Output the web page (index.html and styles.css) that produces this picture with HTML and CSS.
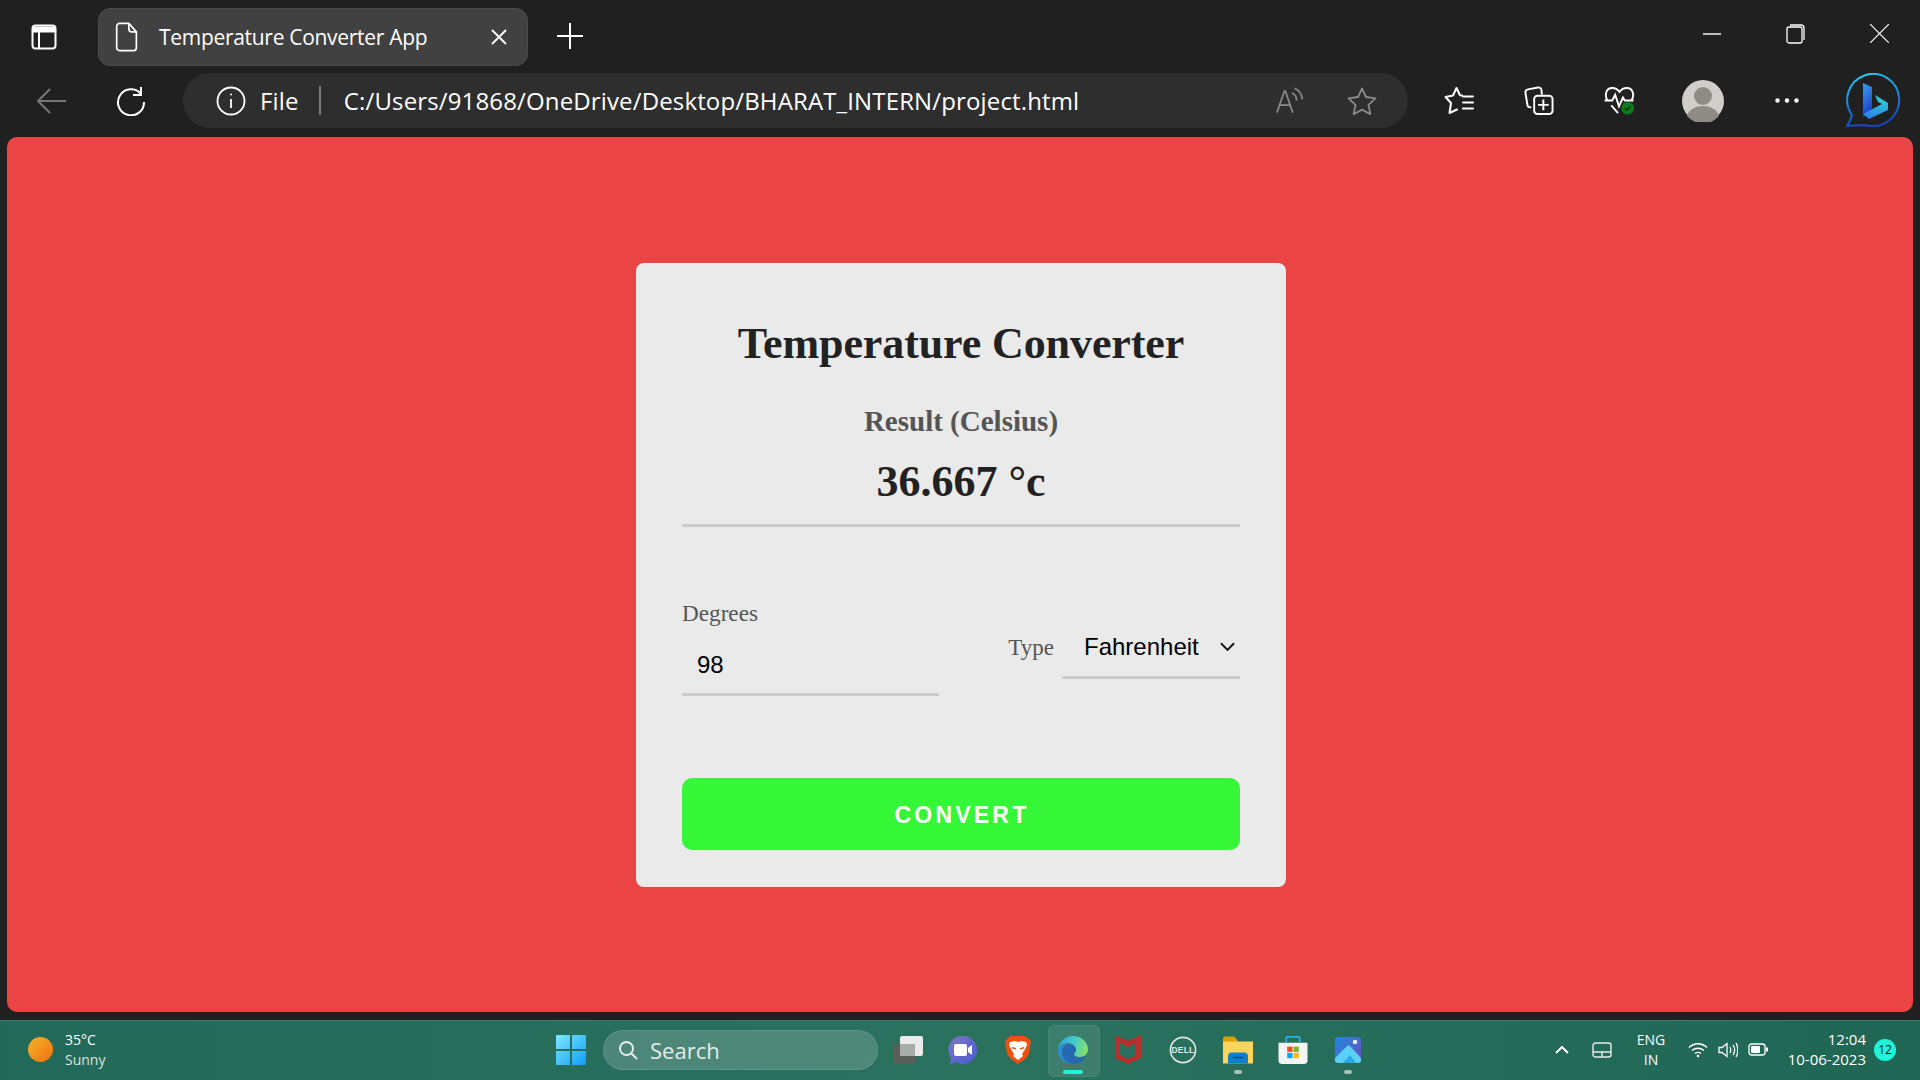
FILE: index.html
```html
<!DOCTYPE html>
<html lang="en">
<head>
    <meta charset="UTF-8">
    <meta name="viewport" content="width=device-width, initial-scale=1.0">
    <title>Temperature Converter App</title>
    <link rel="stylesheet" href="styles.css">
</head>
<body>
    <!-- Browser tabs row -->
    <div class="tab-row">
        <svg class="sidebar-icon" viewBox="0 0 26 26" fill="none" stroke="#fff" stroke-width="2">
            <rect x="1.5" y="1.5" width="23" height="23" rx="3"/>
            <path d="M2 3.5h22v4H2z" fill="#fff"/>
            <path d="M8 7v17"/>
        </svg>
        <div class="tab">
            <svg class="tab-doc" viewBox="0 0 24 32" fill="none" stroke="#fff" stroke-width="1.8" stroke-linejoin="round">
                <path d="M4 1.5h10l8 9v17a3 3 0 0 1-3 3H4a3 3 0 0 1-3-3v-23a3 3 0 0 1 3-3z"/>
                <path d="M14 1.5v6a3 3 0 0 0 3 3h5"/>
            </svg>
            <span class="tab-title">Temperature Converter App</span>
            <svg class="tab-close" viewBox="0 0 16 16" stroke="#fff" stroke-width="1.8"><path d="M1 1l14 14M15 1L1 15"/></svg>
        </div>
        <svg class="new-tab" viewBox="0 0 26 26" stroke="#fff" stroke-width="2"><path d="M13 0v26M0 13h26"/></svg>
        <div class="window-btns">
            <svg class="win-min" viewBox="0 0 18 2" stroke="#fff" stroke-width="1.4"><path d="M0 1h18"/></svg>
            <svg class="win-restore" viewBox="0 0 19 20" fill="none" stroke="#fff" stroke-width="1.3">
                <rect x="1" y="3" width="15" height="16" rx="2"/>
                <path d="M4 1h11a3 3 0 0 1 3 3v12"/>
            </svg>
            <svg class="win-close" viewBox="0 0 19 19" stroke="#fff" stroke-width="1.2"><path d="M0 0l19 19M19 0L0 19"/></svg>
        </div>
    </div>

    <!-- Address bar row -->
    <div class="tool-row">
        <svg class="back-icon" viewBox="0 0 30 26" fill="none" stroke="#777" stroke-width="2"><path d="M30 13H2M14 1L2 13l12 12"/></svg>
        <svg class="reload-icon" viewBox="0 0 30 30" fill="none" stroke="#fff" stroke-width="2">
            <path d="M25 8A13 13 0 1 0 28 16"/>
            <path d="M25 1v8h-8"/>
        </svg>
        <div class="address">
            <svg class="info-icon" viewBox="0 0 30 30" fill="none" stroke="#fff" stroke-width="1.8">
                <circle cx="15" cy="15" r="13.5"/>
                <path d="M15 13v9"/>
                <circle cx="15" cy="8.5" r="1" fill="#fff" stroke="none"/>
            </svg>
            <span class="file-label">File</span>
            <span class="address-sep"></span>
            <span class="url">C:/Users/91868/OneDrive/Desktop/BHARAT_INTERN/project.html</span>
            <svg class="read-icon" viewBox="0 0 30 28" fill="none" stroke="#8a8a8a" stroke-width="1.8">
                <path d="M1 27L9 4h1l8 23M4 19h12"/>
                <path d="M17 6c3 1 5 4 5 8M20 1c4 2 8 6 8 12"/>
            </svg>
            <svg class="addr-star" viewBox="0 0 30 28" fill="none" stroke="#8a8a8a" stroke-width="1.8" stroke-linejoin="round">
                <path d="M15 1.5l4 8.5 9.5 1.3-7 6.6 1.8 9.3-8.3-4.6-8.3 4.6 1.8-9.3-7-6.6L11 10z"/>
            </svg>
        </div>
        <svg class="tool-icon fav-icon" viewBox="0 0 30 28" fill="none" stroke="#fff" stroke-width="2" stroke-linejoin="round" stroke-linecap="round">
            <path d="M18 9l-2-.3L12.500 1.500 9 9 1.500 10.500 7 16.500 5.500 26.500l7.500-3.500"/>
            <path d="M19 10h10M19 16h10M19 22h10"/>
        </svg>
        <svg class="tool-icon coll-icon" viewBox="0 0 30 30" fill="none" stroke="#fff" stroke-width="2">
            <path d="M7 22H6a3 3 0 0 1-3-2.500L1 7a3 3 0 0 1 2.500-3.500L14 1.500a3 3 0 0 1 3.500 2.500L18 9"/>
            <rect x="10" y="10" width="19" height="19" rx="3.500"/>
            <path d="M19.500 14v11M14 19.500h11"/>
        </svg>
        <svg class="tool-icon heart-icon" viewBox="0 0 31 30" fill="none" stroke="#fff" stroke-width="2">
            <path d="M3 15C0 10 1 2 8 2c3 0 6 2 7.500 4C17 4 20 2 23 2c7 0 8 8 5 13"/>
            <path d="M0 15h8l3-6 4 12 4-9 2 3h9"/>
            <path d="M7 20l7 8"/>
            <circle cx="24" cy="23" r="6.500" fill="#0f7a1e" stroke="none"/>
            <path d="M21 23l2 2 4-4" stroke="#12350f" stroke-width="1.500"/>
        </svg>
        <svg class="avatar" viewBox="0 0 42 42">
            <circle cx="21" cy="21" r="21" fill="#cfcec9"/>
            <circle cx="21" cy="16" r="9" fill="#8f8c88"/>
            <path d="M5 36c2-7 9-10 16-10s14 3 16 10a21 21 0 0 1-32 0z" fill="#8f8c88"/>
        </svg>
        <svg class="dots-icon" viewBox="0 0 24 5" fill="#fff">
            <circle cx="2.500" cy="2.500" r="2.200"/>
            <circle cx="12" cy="2.500" r="2.200"/>
            <circle cx="21.500" cy="2.500" r="2.200"/>
        </svg>
        <svg class="bing-icon" viewBox="0 0 55 55" fill="none">
            <defs>
                <linearGradient id="bingEdge" x1="0.300" y1="0" x2="0.500" y2="1">
                    <stop offset="0" stop-color="#26c6f0"/>
                    <stop offset="1" stop-color="#1545c0"/>
                </linearGradient>
                <linearGradient id="bingB" x1="0" y1="0" x2="0.300" y2="1">
                    <stop offset="0" stop-color="#3aa0f0"/>
                    <stop offset="1" stop-color="#1b3fc8"/>
                </linearGradient>
                <linearGradient id="bingC" x1="0.600" y1="0" x2="0.400" y2="1">
                    <stop offset="0" stop-color="#2fd6d8"/>
                    <stop offset="1" stop-color="#2a7fe6"/>
                </linearGradient>
            </defs>
            <path d="M1 53C3 50 5 47 6 42A26 26 0 1 1 22 52.400C14 52 8 52 1 53z" stroke="url(#bingEdge)" stroke-width="2"/>
            <path d="M17 10l9 4v24l-9 6z" fill="url(#bingB)"/>
            <path d="M29 22l13 8v7L23 46l-6-5 19-10-4-2z" fill="url(#bingC)"/>
        </svg>
    </div>

    <!-- Page content -->
    <div class="viewport">
        <main class="page">
            <section class="card">
                <h1 class="card-title">Temperature Converter</h1>
                <h2 class="result-label">Result (Celsius)</h2>
                <p class="result-value">36.667 °c</p>
                <hr class="divider">
                <div class="form-row">
                    <div class="degrees-group">
                        <label class="field-label" for="degrees">Degrees</label>
                        <input class="degrees-input" type="text" id="degrees" value="98">
                    </div>
                    <div class="type-group">
                        <label class="field-label type-label" for="type">Type</label>
                        <div class="select-wrap">
                            <select class="type-select" id="type">
                                <option>Fahrenheit</option>
                                <option>Celsius</option>
                            </select>
                            <svg class="select-arrow" viewBox="0 0 16 10" fill="none" stroke="#111" stroke-width="2"><path d="M1 1l7 7 7-7"/></svg>
                        </div>
                    </div>
                </div>
                <button class="convert-btn" type="button">CONVERT</button>
            </section>
        </main>
    </div>

    <!-- Windows taskbar -->
    <footer class="taskbar">
        <div class="weather">
            <span class="sun"></span>
            <div class="weather-text">
                <span class="temp">35°C</span>
                <span class="sky">Sunny</span>
            </div>
        </div>
        <div class="start-btn">
            <svg class="start-icon" viewBox="0 0 30 30">
                <defs>
                    <linearGradient id="winBlue" x1="0" y1="0" x2="1" y2="1">
                        <stop offset="0" stop-color="#7fe8ff"/>
                        <stop offset="1" stop-color="#0f9cf5"/>
                    </linearGradient>
                </defs>
                <path d="M0 1a1 1 0 0 1 1-1h13v14H0zM16 0h13a1 1 0 0 1 1 1v13H16zM0 16h14v14H1a1 1 0 0 1-1-1zM16 16h14v13a1 1 0 0 1-1 1H16z" fill="url(#winBlue)"/>
            </svg>
        </div>
        <div class="search-pill">
            <svg class="search-icon" viewBox="0 0 20 20" fill="none" stroke="#e6ece9" stroke-width="2"><circle cx="8.500" cy="8.500" r="6.500"/><path d="M13 13l6 6"/></svg>
            <span>Search</span>
        </div>
        <div class="task-icons">
            <div class="task-item">
                <svg class="task-svg" viewBox="0 0 30 28">
                    <rect x="0" y="8" width="22" height="20" rx="2" fill="#5a5f5c"/>
                    <rect x="7" y="0" width="23" height="20" rx="2" fill="#e8ebe9"/>
                    <rect x="7" y="8" width="15" height="12" fill="#a9aeab"/>
                </svg>
            </div>
            <div class="task-item">
                <svg class="task-svg" viewBox="0 0 30 28">
                    <defs>
                        <linearGradient id="meetGrad" x1="0" y1="0" x2="1" y2="1">
                            <stop offset="0" stop-color="#7a78c8"/>
                            <stop offset="1" stop-color="#4c5bd0"/>
                        </linearGradient>
                    </defs>
                    <path d="M15 0a14 14 0 1 1-7 26c-2 1-4 2-7 2 1-1 2-3 2-6A14 14 0 0 1 15 0z" fill="url(#meetGrad)"/>
                    <rect x="6" y="8" width="13" height="12" rx="2" fill="#fff"/>
                    <path d="M20 12l4-3v10l-4-3z" fill="#fff"/>
                </svg>
            </div>
            <div class="task-item">
                <svg class="task-svg brave-svg" viewBox="0 0 26 28">
                    <path d="M6 0h14l4 3 2 2-2 12c-1 4-6 8-11 11C8 25 3 21 2 17L0 5l2-2z" fill="#f1500f"/>
                    <path d="M5 6l5-1 3 1 3-1 5 1 1 3-3 6-2 3 1 2-5 4-5-4 1-2-2-3-3-6z" fill="#fff"/>
                    <path d="M7 11l4 1v1.500l-4-1zM19 11l-4 1v1.500l4-1z" fill="#f1500f"/>
                </svg>
            </div>
            <div class="task-item task-active">
                <svg class="task-svg" viewBox="0 0 30 28">
                    <defs>
                        <linearGradient id="edgeTop" x1="0" y1="0.300" x2="1" y2="0.500">
                            <stop offset="0" stop-color="#1a9be0"/>
                            <stop offset="0.550" stop-color="#30c8c0"/>
                            <stop offset="1" stop-color="#7fdc55"/>
                        </linearGradient>
                    </defs>
                    <path d="M15 0c8 0 15 6 15 13 0 5-4 8-8 8-3 0-6-1-6-3 0-1 2-2 2-4 0-4-4-7-9-7-4 0-7 2-9 6C1 6 7 0 15 0z" fill="url(#edgeTop)"/>
                    <path d="M0 13c2-3 5-5 9-5-4 2-6 6-5 10 1 5 6 10 13 10h-3C6 28 0 21 0 13z" fill="#0f86d8"/>
                    <path d="M9 8c4-1 9 2 9 6 0 2-2 2-2 4 0 3 4 4 8 3 2 0 3-1 4-1-3 5-7 8-12 8-6 0-11-4-12-10-1-4 1-8 5-10z" fill="#0d5aa8"/>
                </svg>
                <span class="active-bar"></span>
            </div>
            <div class="task-item">
                <svg class="task-svg mcafee-svg" viewBox="0 0 26 29"><path d="M0 0l13 6 13-6v23l-13 6-13-6zM5 8v12l8 4 8-4V8l-8 4z" fill="#b5302c"/></svg>
            </div>
            <div class="task-item">
                <svg class="task-svg" viewBox="0 0 30 30" fill="none">
                    <circle cx="15" cy="15" r="13.500" stroke="#e4e8e6" stroke-width="1.700"/>
                    <text class="dell-text" x="15" y="18" text-anchor="middle">DELL</text>
                </svg>
            </div>
            <div class="task-item">
                <svg class="task-svg" viewBox="0 0 30 27">
                    <path d="M0 2a2 2 0 0 1 2-2h9l4 4v6H0z" fill="#d9a008"/>
                    <path d="M0 5h30v22H0z" fill="#fbd55e"/>
                    <path d="M5 27v-7a4 4 0 0 1 4-4h12a4 4 0 0 1 4 4v7z" fill="#0c7fd0"/>
                    <path d="M10 21h10" stroke="#063f75" stroke-width="1.300"/>
                </svg>
                <span class="running-dot"></span>
            </div>
            <div class="task-item">
                <svg class="task-svg" viewBox="0 0 30 29">
                    <path d="M0 7h30v18a4 4 0 0 1-4 4H4a4 4 0 0 1-4-4z" fill="#f3f4f4"/>
                    <path d="M8 7V2a1 1 0 0 1 1-1h12a1 1 0 0 1 1 1v5" fill="none" stroke="#23b4e8" stroke-width="1.800"/>
                    <rect x="9" y="11" width="5.500" height="5.500" fill="#ea4c25"/>
                    <rect x="15.500" y="11" width="5.500" height="5.500" fill="#7fb900"/>
                    <rect x="9" y="17.500" width="5.500" height="5.500" fill="#05a5ef"/>
                    <rect x="15.500" y="17.500" width="5.500" height="5.500" fill="#ffb800"/>
                </svg>
            </div>
            <div class="task-item">
                <svg class="task-svg photos-svg" viewBox="0 0 26 26">
                    <defs>
                        <linearGradient id="photoBg" x1="0" y1="0" x2="1" y2="1">
                            <stop offset="0" stop-color="#1c8ae0"/>
                            <stop offset="1" stop-color="#6f4bb8"/>
                        </linearGradient>
                    </defs>
                    <rect width="26" height="26" rx="3" fill="url(#photoBg)"/>
                    <circle cx="20" cy="5" r="2.300" fill="#e8e6f6"/>
                    <path d="M0 21L12 9a2 2 0 0 1 3 0l11 12v2a3 3 0 0 1-3 3H3a3 3 0 0 1-3-3z" fill="#5ad0f5"/>
                    <path d="M8 26l7-8 6 8z" fill="#2aa7e8"/>
                </svg>
                <span class="running-dot"></span>
            </div>
        </div>
        <div class="tray">
            <svg class="tray-chevron" viewBox="0 0 14 8" fill="none" stroke="#fff" stroke-width="2"><path d="M1 7l6-6 6 6"/></svg>
            <svg class="tray-pad" viewBox="0 0 20 16" fill="none" stroke="#e6ece9" stroke-width="1.400">
                <rect x="1" y="1" width="18" height="14" rx="2.500"/>
                <path d="M1 10h18M10 10v5"/>
            </svg>
            <div class="lang"><span>ENG</span><span>IN</span></div>
            <svg class="tray-wifi" viewBox="0 0 20 16" fill="none" stroke="#fff" stroke-width="1.400">
                <path d="M1 5.500c5-5 13-5 18 0M4 8.500c3.500-3 8.500-3 12 0M7 11.500c2-1.500 4-1.500 6 0"/>
                <circle cx="10" cy="14" r="1.300" fill="#fff" stroke="none"/>
            </svg>
            <svg class="tray-sound" viewBox="0 0 20 16" fill="none" stroke="#fff" stroke-width="1.300">
                <path d="M1 5.500h3L9 1.500v13L4 10.500H1z"/>
                <path d="M12 5c1 2 1 4 0 6M15 3c2 3 2 7 0 10M18 1c2.500 4 2.500 10 0 14"/>
            </svg>
            <svg class="tray-battery" viewBox="0 0 20 13" fill="none" stroke="#fff" stroke-width="1.300">
                <rect x="1" y="1" width="16" height="11" rx="2.500"/>
                <rect x="3" y="3" width="9" height="7" rx="1" fill="#fff" stroke="none"/>
                <path d="M19 4.500v4" stroke-width="2"/>
            </svg>
            <div class="clock"><span>12:04</span><span>10-06-2023</span></div>
            <span class="notif-badge">12</span>
        </div>
    </footer>
</body>
</html>
```

FILE: styles.css
```css
* {
    box-sizing: border-box;
}

html, body {
    height: 100%;
}

body {
    margin: 0;
    width: 1920px;
    height: 1080px;
    overflow: hidden;
    display: flex;
    flex-direction: column;
    background-color: #202020;
    font-family: 'Open Sans', 'Noto Sans', sans-serif;
    color: #fff;
}

svg {
    display: block;
    flex: none;
}

/* Tabs row */
.tab-row {
    height: 73px;
    display: flex;
    align-items: flex-start;
    padding-left: 31px;
}

.sidebar-icon {
    width: 26px;
    height: 26px;
    margin-top: 24px;
}

.tab {
    width: 430px;
    height: 58px;
    margin-top: 8px;
    margin-left: 41px;
    padding: 0 20px 0 16px;
    display: flex;
    align-items: center;
    background-color: #414141;
    border: 1px solid #4b4b4b;
    border-radius: 12px;
}

.tab-doc {
    width: 24px;
    height: 30px;
}

.tab-title {
    margin-left: 20px;
    font-size: 21px;
    letter-spacing: -0.3px;
    white-space: nowrap;
}

.tab-close {
    width: 16px;
    height: 16px;
    margin-left: auto;
}

.new-tab {
    width: 26px;
    height: 26px;
    margin-top: 23px;
    margin-left: 29px;
}

.window-btns {
    margin-left: auto;
    display: flex;
    align-items: center;
    height: 19px;
    margin-top: 24px;
    padding-right: 31px;
}

.win-min {
    width: 18px;
    height: 2px;
}

.win-restore {
    width: 19px;
    height: 20px;
    margin-left: 65px;
}

.win-close {
    width: 19px;
    height: 19px;
    margin-left: 65px;
}

/* Address row */
.tool-row {
    height: 56px;
    display: flex;
    align-items: center;
    padding-left: 36px;
    padding-bottom: 1px;
}

.back-icon {
    width: 30px;
    height: 26px;
}

.reload-icon {
    width: 30px;
    height: 30px;
    margin-left: 50px;
}

.address {
    width: 1225px;
    height: 55px;
    margin-left: 37px;
    padding-left: 33px;
    display: flex;
    align-items: center;
    background-color: #2e2e2e;
    border-radius: 28px;
}

.info-icon {
    width: 30px;
    height: 30px;
}

.file-label {
    margin-left: 14px;
    font-size: 24px;
    letter-spacing: 0.2px;
}

.address-sep {
    width: 2px;
    height: 29px;
    margin-left: 20px;
    background-color: #7c7c7c;
}

.url {
    margin-left: 23px;
    font-size: 24px;
    letter-spacing: 0.14px;
    white-space: nowrap;
}

.read-icon {
    width: 28px;
    height: 27px;
    margin-left: auto;
}

.addr-star {
    width: 30px;
    height: 28px;
    margin-left: 43px;
    margin-right: 31px;
}

.tool-icon {
    width: 30px;
    height: 29px;
}

.fav-icon {
    margin-left: 36px;
}

.coll-icon {
    margin-left: 50px;
}

.heart-icon {
    width: 31px;
    margin-left: 50px;
}

.avatar {
    width: 42px;
    height: 42px;
    margin-left: 47px;
}

.dots-icon {
    width: 24px;
    height: 5px;
    margin-left: 51px;
}

.bing-icon {
    width: 55px;
    height: 55px;
    margin-left: 47px;
}

/* Page */
.viewport {
    flex: 1;
    padding: 8px 7px;
}

.page {
    height: 100%;
    padding-left: 2px;
    display: flex;
    align-items: center;
    justify-content: center;
    background-color: #eb4444;
    border-radius: 10px;
}

.card {
    width: 650px;
    height: 624px;
    padding: 56px 46px 37px;
    background-color: #eaeaea;
    border-radius: 8px;
    text-align: center;
    font-family: 'Liberation Serif', serif;
}

.card-title {
    margin: 0;
    font-size: 44px;
    line-height: 50px;
    letter-spacing: -0.1px;
    color: #222;
}

.result-label {
    margin: 35px 0 0;
    font-size: 29px;
    line-height: 34px;
    color: #555;
}

.result-value {
    margin: 19px 0 0;
    font-size: 44px;
    line-height: 50px;
    font-weight: bold;
    color: #222;
}

.divider {
    height: 3px;
    margin: 17px 0 0;
    border: none;
    background-color: #ccc;
}

.form-row {
    margin-top: 73px;
    display: flex;
    align-items: center;
    justify-content: space-between;
}

.field-label {
    font-size: 23.2px;
    line-height: 26px;
    color: #555;
}

.type-label {
    font-size: 23px;
}

.degrees-group {
    width: 257px;
    display: flex;
    flex-direction: column;
    align-items: flex-start;
}

.degrees-input {
    width: 100%;
    height: 59px;
    margin-top: 11px;
    padding: 1px 15px 0;
    border: none;
    border-bottom: 3px solid #ccc;
    background: transparent;
    outline: none;
    font-family: 'Liberation Sans', sans-serif;
    font-size: 24px;
    color: #000;
}

.type-group {
    display: flex;
    align-items: center;
    gap: 8px;
}

.select-wrap {
    position: relative;
}

.type-select {
    display: block;
    width: 178px;
    height: 62px;
    padding: 0 0 0 22px;
    border: none;
    border-bottom: 3px solid #ccc;
    border-radius: 0;
    background: transparent;
    appearance: none;
    outline: none;
    font-family: 'Liberation Sans', sans-serif;
    font-size: 24px;
    color: #000;
}

.select-arrow {
    position: absolute;
    top: 25px;
    right: 5px;
    width: 15px;
    height: 10px;
    pointer-events: none;
}

.convert-btn {
    display: block;
    width: 100%;
    height: 72px;
    margin-top: 82px;
    padding: 3px 0 0 2px;
    border: none;
    border-radius: 10px;
    background-color: #35f738;
    font-family: 'Liberation Sans', sans-serif;
    font-size: 23px;
    font-weight: bold;
    letter-spacing: 3.2px;
    color: #fff;
    cursor: pointer;
}

/* Taskbar */
.taskbar {
    height: 60px;
    padding-bottom: 2px;
    display: flex;
    align-items: center;
    background: linear-gradient(90deg, #23695a, #2a715e 50%, #206654);
    border-top: 1px solid #3c7c6a;
}

.weather {
    width: 543px;
    padding-left: 28px;
    display: flex;
    align-items: center;
    gap: 12px;
}

.sun {
    width: 25px;
    height: 25px;
    border-radius: 50%;
    background: linear-gradient(135deg, #f4b52a, #f0700f);
}

.weather-text {
    display: flex;
    flex-direction: column;
    font-size: 14px;
    line-height: 20px;
}

.sky {
    color: #d8e2de;
}

.start-btn {
    width: 56px;
    display: flex;
    justify-content: center;
}

.start-icon {
    width: 30px;
    height: 30px;
}

.search-pill {
    width: 275px;
    height: 40px;
    margin-left: 4px;
    padding-left: 14px;
    display: flex;
    align-items: center;
    gap: 12px;
    background-color: rgba(255, 255, 255, 0.17);
    border: 1px solid rgba(255, 255, 255, 0.1);
    border-radius: 20px;
    font-size: 22px;
    color: #e6ece9;
}

.search-icon {
    width: 20px;
    height: 20px;
}

.task-icons {
    display: flex;
    margin-left: 2px;
}

.task-item {
    position: relative;
    width: 55px;
    height: 50px;
    display: flex;
    align-items: center;
    justify-content: center;
}

.task-svg {
    width: 30px;
    height: 28px;
}

.brave-svg {
    width: 26px;
}

.mcafee-svg {
    width: 26px;
    height: 29px;
}

.photos-svg {
    width: 26px;
    height: 26px;
}

.dell-text {
    font-family: 'Liberation Sans', sans-serif;
    font-size: 9px;
    font-weight: bold;
    letter-spacing: 0.3px;
    fill: #e4e8e6;
}

.task-active::before {
    content: "";
    position: absolute;
    top: 0;
    left: 3px;
    width: 50px;
    height: 50px;
    background-color: rgba(255, 255, 255, 0.1);
    border: 1px solid rgba(255, 255, 255, 0.06);
    border-radius: 6px;
}

.active-bar {
    position: absolute;
    left: 18px;
    bottom: 1px;
    width: 20px;
    height: 4px;
    background-color: #1ff5d9;
    border-radius: 2px;
}

.running-dot {
    position: absolute;
    left: 24px;
    bottom: 1px;
    width: 8px;
    height: 4px;
    background-color: #a9c0b8;
    border-radius: 2px;
}

.tray {
    margin-left: auto;
    padding-right: 24px;
    display: flex;
    align-items: center;
}

.tray-chevron {
    width: 14px;
    height: 8px;
}

.tray-pad {
    width: 20px;
    height: 16px;
    margin-left: 23px;
}

.lang {
    width: 34px;
    margin-left: 22px;
    display: flex;
    flex-direction: column;
    align-items: center;
    font-size: 14px;
    line-height: 20px;
}

.tray-wifi {
    width: 20px;
    height: 16px;
    margin-left: 20px;
}

.tray-sound {
    width: 20px;
    height: 16px;
    margin-left: 10px;
}

.tray-battery {
    width: 20px;
    height: 13px;
    margin-left: 10px;
}

.clock {
    width: 98px;
    padding-bottom: 2px;
    display: flex;
    flex-direction: column;
    align-items: flex-end;
    font-size: 15px;
    line-height: 20px;
}

.notif-badge {
    width: 22px;
    height: 22px;
    margin-left: 8px;
    border-radius: 50%;
    background-color: #1ff5d9;
    color: #111;
    font-size: 12px;
    line-height: 22px;
    text-align: center;
}
```
